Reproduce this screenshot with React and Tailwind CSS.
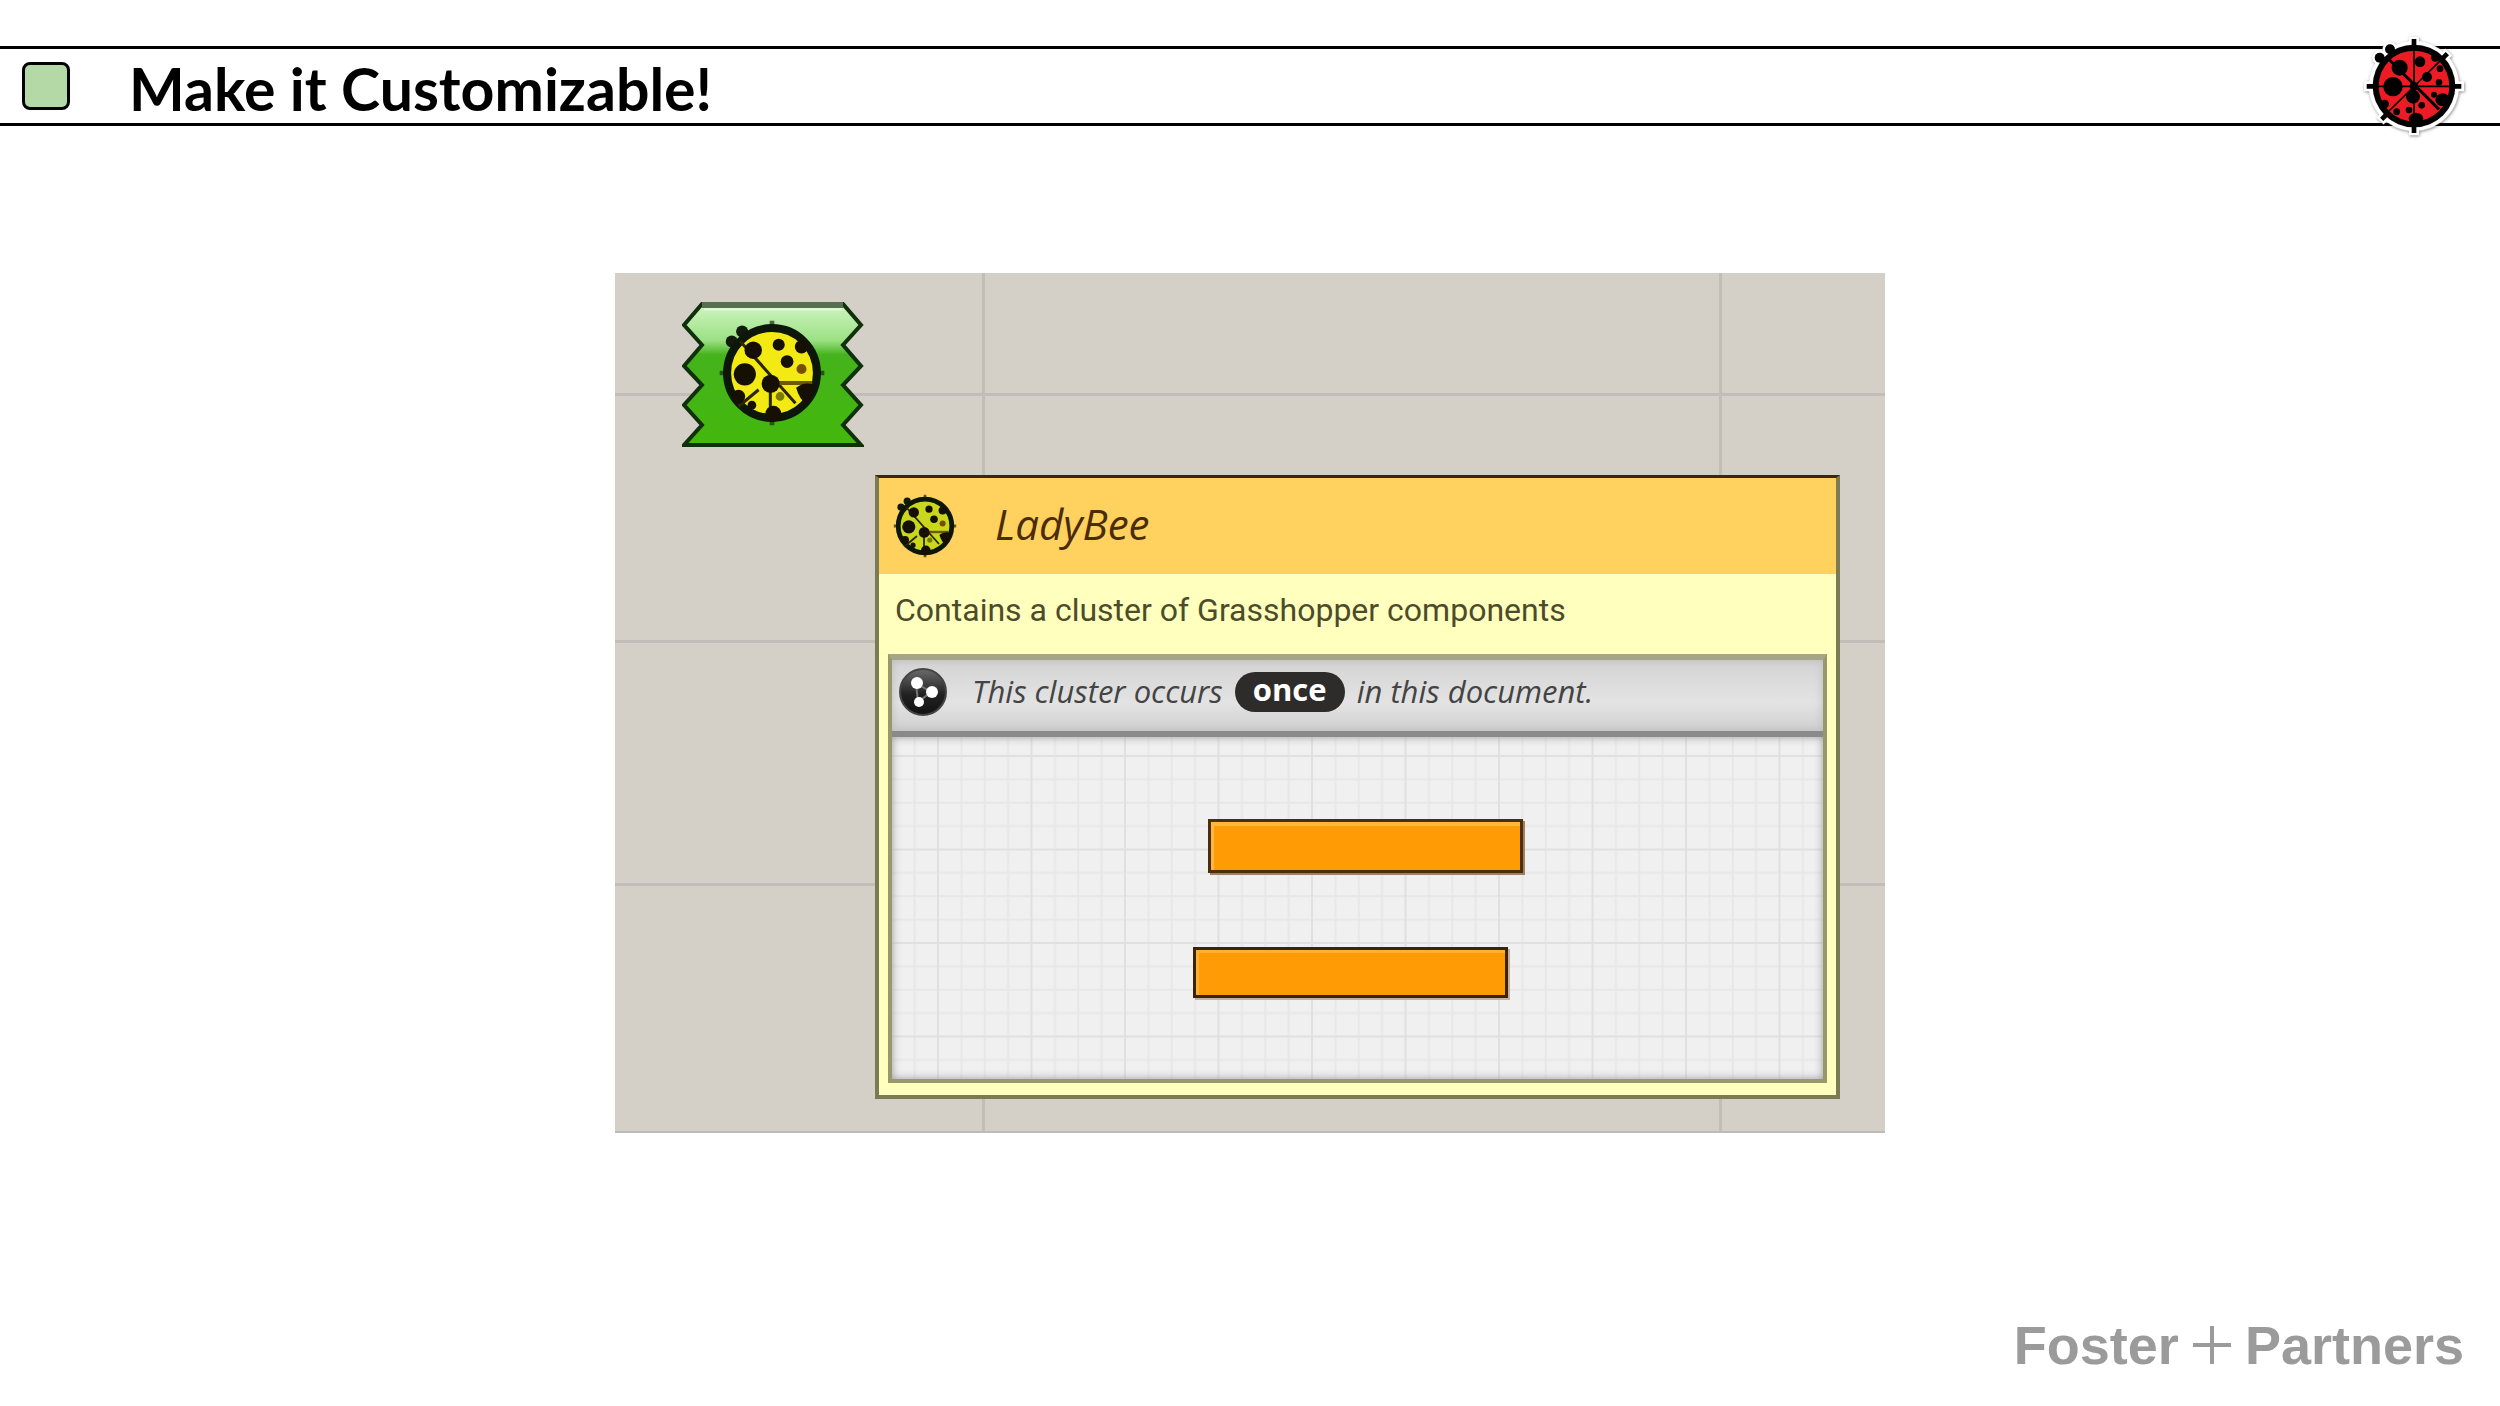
const zigzag =
  'M20 3 L161 3 L179 24 L161 44 L179 65 L161 84 L179 104 L161 124 L179 144 L2 144 L20 124 L2 104 L20 84 L2 65 L20 44 L2 24 Z'

function LadybugLogo({ className }) {
  return (
    <svg viewBox="28 5 330 330" className={className} role="img" aria-label="Ladybug">
      <g stroke="#fff" fill="#fff" className="drop-shadow-[2px_3px_4px_rgba(0,0,0,0.45)]">
        <circle cx="193" cy="170" r="135" />
        <path d="M193 22V318M43 171H343M91 275L297 68" strokeWidth="30" />
        <circle cx="90" cy="85" r="22" />
        <circle cx="121" cy="60" r="22" />
      </g>
      <circle cx="193" cy="170" r="124" fill="#000" />
      <circle cx="90" cy="85" r="15" />
      <circle cx="121" cy="60" r="15" />
      <path d="M193 29V60M193 280V311M51 171H80M306 171H335M96 270L112 254M278 88L293 73" stroke="#000" strokeWidth="14" />
      <circle cx="193" cy="170" r="106" fill="#ed1c24" />
      <path d="M193 62V278M86 171H300M118 245L272 94" stroke="#000" strokeWidth="5" />
      <path d="M120 92L268 240" stroke="#000" strokeWidth="9" />
      <circle cx="193" cy="171" r="13" />
      <circle cx="150" cy="115" r="24" />
      <circle cx="130" cy="172" r="29" />
      <circle cx="211" cy="97" r="16" />
      <circle cx="232" cy="143" r="15" />
      <circle cx="271" cy="118" r="10" />
      <circle cx="268" cy="159" r="10" />
      <circle cx="190" cy="202" r="21" />
      <circle cx="216" cy="228" r="10" />
      <circle cx="178" cy="242" r="10" />
      <circle cx="141" cy="247" r="10" />
      <circle cx="105" cy="224" r="13" />
      <circle cx="253" cy="196" r="9" />
      <ellipse cx="279" cy="211" rx="22" ry="19" />
      <ellipse cx="199" cy="268" rx="22" ry="18" />
      <circle cx="257" cy="84" r="13" />
    </svg>
  )
}

function BeeIcon({ className, body }) {
  return (
    <svg viewBox="-170 -170 340 340" className={className} aria-hidden="true">
      <path d="M0 -156V156M-156 0H156" stroke="#1c2a10" strokeWidth="14" opacity="0.7" />
      <circle cx="-89" cy="-124" r="18" fill="#111a0c" />
      <circle cx="-120" cy="-94" r="18" fill="#111a0c" />
      <circle r="134" fill={body} stroke="#0d160a" strokeWidth="24" />
      <path d="M-95 -95L70 90M-100 100L-40 50M-5 30V120" stroke="#2b2600" strokeWidth="9" />
      <path d="M-5 30L120 30" stroke="#6b5a00" strokeWidth="12" />
      <g fill="#150f04">
        <circle cx="-56" cy="-68" r="26" />
        <circle cx="-81" cy="4" r="33" />
        <circle cx="20" cy="-84" r="18" />
        <circle cx="45" cy="-34" r="19" />
        <circle cx="-4" cy="32" r="27" />
        <circle cx="4" cy="122" r="24" />
        <circle cx="-100" cy="70" r="20" />
        <circle cx="-60" cy="96" r="13" />
        <path d="M72 44Q100 22 132 38L104 94Q82 80 72 44Z" />
        <circle cx="88" cy="-78" r="20" />
      </g>
      <circle cx="88" cy="-12" r="15" fill="#7a4d00" />
      <circle cx="24" cy="70" r="13" fill="#7b7a00" />
    </svg>
  )
}

function ClusterIcon({ className }) {
  return (
    <svg viewBox="0 0 50 50" className={className} aria-hidden="true">
      <defs>
        <linearGradient id="ball" x1="0" y1="0" x2="0" y2="1">
          <stop offset="0" stopColor="#6b6b6b" />
          <stop offset="0.55" stopColor="#222" />
          <stop offset="1" stopColor="#111" />
        </linearGradient>
      </defs>
      <circle cx="25" cy="25" r="23" fill="url(#ball)" stroke="#444" strokeWidth="2" />
      <path d="M18 16L33 25L20 35Z" fill="none" stroke="#777" strokeWidth="2" />
      <circle cx="19" cy="16" r="6" fill="#fff" />
      <circle cx="34" cy="25" r="6" fill="#fff" />
      <circle cx="21" cy="35" r="5" fill="#fff" />
    </svg>
  )
}

function ClusterComponent() {
  return (
    <div className="relative ml-[67px] h-[148px] w-[182px]">
      <svg viewBox="0 0 182 148" className="h-full w-full" aria-hidden="true">
        <defs>
          <linearGradient id="green" x1="0" y1="0" x2="0" y2="1">
            <stop offset="0" stopColor="#d0f5c4" />
            <stop offset="0.26" stopColor="#9be083" />
            <stop offset="0.36" stopColor="#45b31c" />
            <stop offset="1" stopColor="#43b80c" />
          </linearGradient>
        </defs>
        <path d={zigzag} fill="url(#green)" stroke="#10300c" strokeWidth="4" />
        <path d="M22 8 L160 8" fill="none" stroke="#dff8d5" strokeWidth="3" />
        <path d="M20 4 H161" stroke="#56704f" strokeWidth="6" />
      </svg>
      <BeeIcon body="#f2ea12" className="absolute top-[15px] left-[33px] size-[114px]" />
    </div>
  )
}

function Preview() {
  return (
    <div className="relative h-[342px] bg-[#f0f0f0]">
      <svg className="h-full w-full" aria-hidden="true">
        <defs>
          <pattern id="grid" x="45" y="18" width="93.5" height="93.5" patternUnits="userSpaceOnUse">
            <path d="M24.4 0V94M47.8 0V94M71.1 0V94M0 24.4H94M0 47.8H94M0 71.1H94" stroke="#e7e7e7" strokeWidth="2" />
            <path d="M1 0V94M0 1H94" stroke="#e0e0e0" strokeWidth="2" />
          </pattern>
        </defs>
        <rect width="100%" height="100%" fill="url(#grid)" />
      </svg>
      <div className="absolute top-[82px] left-[316px] h-[54px] w-[315px] border-3 border-[#4a2f08] bg-[#ff9b05] shadow-[inset_3px_4px_0_#ffb640,2px_2px_0_#a08060]" />
      <div className="absolute top-[210px] left-[301px] h-[51px] w-[315px] border-3 border-[#3a2404] bg-[#ff9b05] shadow-[inset_3px_3px_0_#ffb030,2px_2px_0_#c8b0a0]" />
      <div className="absolute inset-0 shadow-[inset_0_0_9px_#999]" />
    </div>
  )
}

function Tooltip() {
  return (
    <section className="relative mt-[26px] mr-[45px] mb-8 ml-[260px] border-4 border-t-3 border-[#7a7a55] border-t-[#3a2808] bg-[#ffffbe]">
      <div className="flex h-[96px] items-center gap-9 bg-[#ffd15e] pl-3">
        <BeeIcon body="#c9d81c" className="size-[68px]" />
        <h2 className="pb-1 font-['Open_Sans',sans-serif] text-[42px] leading-none text-[#4a2c08] italic">LadyBee</h2>
      </div>
      <p className="flex h-[80px] items-center pb-2 pl-4 font-['Roboto',sans-serif] text-[32px] text-[#4c4c2a]">
        Contains a cluster of Grasshopper components
      </p>
      <div className="mx-[9px] mb-3 border-4 border-t-6 border-[#98986c] border-t-[#a5a587]">
        <div className="flex h-[77px] items-center border-b-6 border-[#8a8a8a] bg-linear-to-b from-[#d4d4d4] via-[#e3e3e3] via-60% to-[#d0d0d0] pb-2 pl-[6px] font-['Open_Sans',sans-serif] text-[31px] text-[#444] italic shadow-[inset_0_0_8px_#bbb]">
          <ClusterIcon className="mr-6 size-[50px]" />
          <span>This cluster occurs</span>
          <strong className="mx-3 flex h-10 w-[110px] items-center justify-center rounded-full bg-[#2e2c2a] pb-1 text-white not-italic">once</strong>
          <span>in this document.</span>
        </div>
        <Preview />
      </div>
    </section>
  )
}

export default function App() {
  return (
    <div className="flex min-h-screen flex-col bg-white pt-[46px]">
      <header className="flex h-[80px] items-center border-y-3 border-black pr-[31px] pl-[22px]">
        <span className="h-12 w-12 rounded-lg border-3 border-black bg-[#b5d8a7]" />
        <h1 className="ml-[59px] flex-1 pt-1 font-['Lato',sans-serif] text-[59px] leading-none font-bold text-black">
          Make it Customizable!
        </h1>
        <LadybugLogo className="-my-4 size-[110px]" />
      </header>

      <main className="flex flex-1 justify-center pt-[147px]">
        <figure className="relative w-full max-w-[1270px] self-start border-b-2 border-[#bdbbb5] bg-[#d4d0c8] pt-7">
          <div className="absolute inset-y-0 left-[367px] w-[3px] bg-[#c2beb7]" />
          <div className="absolute inset-y-0 left-[1104px] w-[3px] bg-[#c2beb7]" />
          <div className="absolute inset-x-0 top-[120px] h-[3px] bg-[#c2beb7]" />
          <div className="absolute inset-x-0 top-[367px] h-[3px] bg-[#c2beb7]" />
          <div className="absolute inset-x-0 top-[610px] h-[3px] bg-[#c2beb7]" />
          <ClusterComponent />
          <Tooltip />
        </figure>
      </main>

      <footer className="flex items-center justify-end gap-[14px] pr-9 pb-[34px] font-['Liberation_Sans',Arial,sans-serif] text-[54px] leading-none font-bold text-[#9b9b9b]">
        <span>Foster</span>
        <svg viewBox="0 0 38 38" className="size-[38px]" role="img" aria-label="+">
          <path d="M19 0V38M0 19H38" stroke="#9b9b9b" strokeWidth="4" />
        </svg>
        <span>Partners</span>
      </footer>
    </div>
  )
}
